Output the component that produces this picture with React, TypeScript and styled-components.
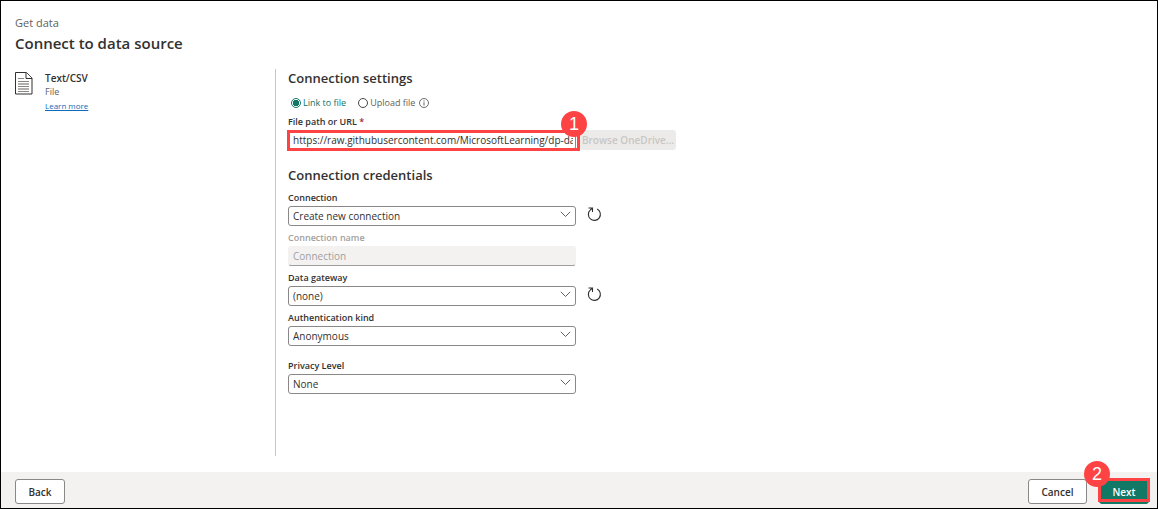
import React, { useState } from "react";
import styled, { createGlobalStyle, css } from "styled-components";

const GlobalStyle = createGlobalStyle`
  *, *::before, *::after { box-sizing: border-box; }
  body {
    margin: 0;
    background: #fff;
    color: #323130;
    font: 10px/14px "Open Sans", "Noto Sans", sans-serif;
  }
  button, input, select { font: inherit; color: inherit; }
`;

const Page = styled.div`
  display: flex;
  flex-direction: column;
  min-height: 100vh;
  border: 1px solid #000;
`;

const Header = styled.header`
  padding: 14px 14px 16px;
`;

const Crumb = styled.p`
  margin: 0;
  font-size: 11px;
  line-height: 16px;
  color: #605e5c;
`;

const Title = styled.h1`
  margin: 2px 0 0;
  font-size: 15px;
  line-height: 20px;
  font-weight: 600;
`;

const Body = styled.main`
  display: flex;
  flex: 1;
  margin-bottom: 16px;
`;

const Source = styled.aside`
  display: flex;
  align-items: flex-start;
  gap: 12px;
  flex: 0 0 275px;
  padding: 2px 14px;
  border-right: 1px solid #c8c6c4;
`;

const SourceInfo = styled.div`
  display: flex;
  flex-direction: column;
  align-items: flex-start;
`;

const SourceName = styled.strong`
  font-weight: 600;
`;

const SourceKind = styled.span`
  font-size: 9px;
  color: #605e5c;
`;

const Link = styled.a`
  font-size: 8px;
  color: #0f6cbd;
`;

const Form = styled.form`
  flex: 1;
  padding-left: 12px;
`;

const SectionTitle = styled.h2<{ $spaced?: boolean }>`
  margin: ${(p) => (p.$spaced ? "16px 0 7px" : "0 0 9px")};
  font-size: 13px;
  line-height: 18px;
  font-weight: 600;
`;

const Radios = styled.div`
  display: flex;
  align-items: center;
  height: 14px;
  margin: 0 0 5px 3px;
`;

const RadioLabel = styled.label<{ $active: boolean }>`
  display: flex;
  align-items: center;
  gap: 2px;
  margin-right: 12px;
  font-size: 9px;
  font-weight: 500;
  color: ${(p) => (p.$active ? "#0f7362" : "#605e5c")};

  &:last-of-type { margin-right: 4px; }
`;

const Radio = styled.input`
  appearance: none;
  width: 10px;
  height: 10px;
  margin: 0;
  border: 1px solid #484644;
  border-radius: 50%;

  &:checked {
    border-color: #117865;
    background: radial-gradient(circle, #117865 0 3px, #fff 3px);
  }
`;

const Field = styled.div<{ $last?: boolean }>`
  margin-top: ${(p) => (p.$last ? "13px" : "5px")};

  &:first-of-type { margin-top: 0; }
`;

const Label = styled.label<{ $disabled?: boolean }>`
  display: block;
  width: fit-content;
  margin-bottom: 1px;
  font-size: 9px;
  font-weight: 600;
  color: ${(p) => (p.$disabled ? "#a19f9d" : "#323130")};
`;

const Required = styled.span`
  color: #a4262c;
`;

const Row = styled.div`
  display: flex;
  align-items: center;
`;

const Control = styled.div`
  position: relative;
  flex: 0 0 288px;
  height: 20px;
`;

const box = css`
  width: 100%;
  height: 20px;
  margin: 0;
  padding: 0 2px 0 4px;
  border: 1px solid #8a8886;
  border-radius: 3px;
  background: #fff;
`;

const TextInput = styled.input`
  ${box}
  display: block;

  &:disabled {
    border-color: #f3f2f1 #f3f2f1 #a19f9d;
    background: #f3f2f1;
  }
  &::placeholder { color: #a19f9d; opacity: 1; }
`;

const Select = styled.select`
  ${box}
  display: block;
  appearance: none;
`;

const Chevron = styled.svg`
  position: absolute;
  top: 4px;
  right: 5px;
  pointer-events: none;
`;

const IconButton = styled.button`
  display: flex;
  margin: 0 0 4px 10px;
  padding: 0;
  border: 0;
  background: none;
`;

const Highlight = styled.span`
  position: absolute;
  inset: 0 -4px -1px -1px;
  border: 3px solid #fd4343;
  pointer-events: none;
`;

const Badge = styled.span`
  position: absolute;
  display: grid;
  place-items: center;
  width: 26px;
  height: 26px;
  border-radius: 50%;
  background: #fd4343;
  color: #fff;
  font: 18px/26px "Liberation Sans", Arial, sans-serif;
`;

const FieldBadge = styled(Badge)`
  top: -19px;
  right: -11px;
`;

const ActionBadge = styled(Badge)`
  top: -18px;
  left: -15px;
`;

const Browse = styled.button`
  height: 20px;
  width: 96px;
  margin-left: 4px;
  padding: 0;
  border: 0;
  border-radius: 3px;
  background: #edebe9;
  color: #c8c6c4;
  font-weight: 600;
  white-space: nowrap;
`;

const Footer = styled.footer`
  display: flex;
  align-items: center;
  gap: 12px;
  padding: 7px 8px 4px 14px;
  background: #f3f2f1;
`;

const Button = styled.button<{ $primary?: boolean; $wide?: boolean }>`
  width: ${(p) => (p.$wide ? 59 : 50)}px;
  height: 25px;
  padding: 0;
  border: 1px solid ${(p) => (p.$primary ? "#117865" : "#8a8886")};
  border-radius: 3px;
  background: ${(p) => (p.$primary ? "#117865" : "#fff")};
  color: ${(p) => (p.$primary ? "#fff" : "#323130")};
  font-weight: 600;
`;

const Spacer = styled.div`
  flex: 1;
`;

const NextAction = styled.div`
  position: relative;
`;

const ActionHighlight = styled(Highlight)`
  inset: -1px -1px 2px;
`;

const DocumentIcon = () => (
  <svg width="18" height="24" viewBox="0 0 18 24" fill="none" aria-hidden="true">
    <path d="M.5 1.500h11l5.500 5.500v16H.5z" fill="#fff" stroke="#323130" />
    <path d="M11 1.500V7.500h6" fill="#fff" stroke="#323130" />
    <path d="M3 7.500h6M3 10.500h11M3 15.500h11M3 20.500h11" stroke="#8a8886" />
    <path d="M3 13h11M3 18h11" stroke="#b3b0ad" strokeWidth="2" />
  </svg>
);

const InfoIcon = () => (
  <svg width="10" height="10" viewBox="0 0 10 10" fill="none" stroke="#605e5c" aria-hidden="true">
    <circle cx="5" cy="5" r="4.500" strokeWidth=".9" />
    <path d="M5 4.300v3.200M5 2.400v1" />
  </svg>
);

const RefreshIcon = () => (
  <svg width="16" height="16" viewBox="0 0 16 16" fill="none" stroke="#323130" strokeWidth="1.100" aria-hidden="true">
    <path d="M11.200 3.100A6 6 0 1 1 4.400 3.900L6.500 2M2.500 2h4v4" />
  </svg>
);

interface DropdownProps {
  id: string;
  label: string;
  value: string;
  refreshable?: boolean;
  last?: boolean;
}

const Dropdown = ({ id, label, value, refreshable, last }: DropdownProps) => (
  <Field $last={last}>
    <Label htmlFor={id}>{label}</Label>
    <Row>
      <Control>
        <Select id={id} defaultValue={value}>
          <option>{value}</option>
        </Select>
        <Chevron width="11" height="9" viewBox="0 0 11 9" fill="none" stroke="#605e5c">
          <path d="M.8 1.800l4.700 4.700 4.700-4.700" />
        </Chevron>
      </Control>
      {refreshable && (
        <IconButton type="button" aria-label={`Refresh ${label}`}>
          <RefreshIcon />
        </IconButton>
      )}
    </Row>
  </Field>
);

export default function App() {
  const [mode, setMode] = useState("link");
  const [url, setUrl] = useState("https://raw.githubusercontent.com/MicrosoftLearning/dp-data/main/orders.csv");

  return (
    <Page>
      <GlobalStyle />
      <Header>
        <Crumb>Get data</Crumb>
        <Title>Connect to data source</Title>
      </Header>
      <Body>
        <Source>
          <DocumentIcon />
          <SourceInfo>
            <SourceName>Text/CSV</SourceName>
            <SourceKind>File</SourceKind>
            <Link href="#learn-more">Learn more</Link>
          </SourceInfo>
        </Source>
        <Form>
          <SectionTitle>Connection settings</SectionTitle>
          <Radios role="radiogroup" aria-label="File source">
            <RadioLabel $active={mode === "link"}>
              <Radio type="radio" name="mode" checked={mode === "link"} onChange={() => setMode("link")} />
              Link to file
            </RadioLabel>
            <RadioLabel $active={mode === "upload"}>
              <Radio type="radio" name="mode" checked={mode === "upload"} onChange={() => setMode("upload")} />
              Upload file
            </RadioLabel>
            <InfoIcon />
          </Radios>
          <div>
            <Label htmlFor="url">
              File path or URL <Required>*</Required>
            </Label>
            <Row>
              <Control>
                <TextInput id="url" value={url} onChange={(e) => setUrl(e.target.value)} />
                <Highlight />
                <FieldBadge>1</FieldBadge>
              </Control>
              <Browse type="button" disabled>Browse OneDrive...</Browse>
            </Row>
          </div>
          <SectionTitle $spaced>Connection credentials</SectionTitle>
          <section>
            <Dropdown id="connection" label="Connection" value="Create new connection" refreshable />
            <Field>
              <Label htmlFor="name" $disabled>Connection name</Label>
              <Row>
                <Control>
                  <TextInput id="name" placeholder="Connection" disabled />
                </Control>
              </Row>
            </Field>
            <Dropdown id="gateway" label="Data gateway" value="(none)" refreshable />
            <Dropdown id="auth" label="Authentication kind" value="Anonymous" />
            <Dropdown id="privacy" label="Privacy Level" value="None" last />
          </section>
        </Form>
      </Body>
      <Footer>
        <Button type="button">Back</Button>
        <Spacer />
        <Button type="button" $wide>Cancel</Button>
        <NextAction>
          <Button type="button" $primary>Next</Button>
          <ActionHighlight />
          <ActionBadge>2</ActionBadge>
        </NextAction>
      </Footer>
    </Page>
  );
}
